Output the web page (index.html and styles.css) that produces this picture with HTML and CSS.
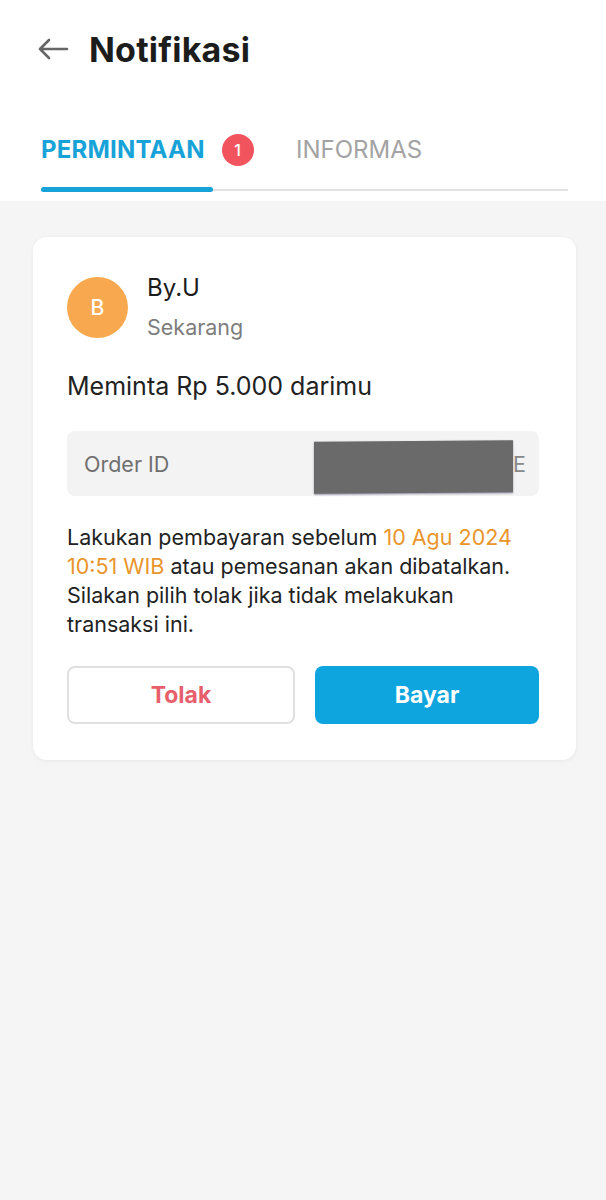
FILE: index.html
```html
<!DOCTYPE html>
<html lang="id">
<head>
    <meta charset="UTF-8">
    <meta name="viewport" content="width=device-width, initial-scale=1.0">
    <title>Notifikasi</title>
    <link rel="stylesheet" href="styles.css">
</head>
<body>
    <header class="top">
        <div class="title-bar">
            <svg class="back" width="32" height="22" viewBox="0 0 32 22" aria-hidden="true">
                <path d="M30 11H3M12 2L3 11l9 9" fill="none" stroke="#666" stroke-width="2.6" stroke-linecap="round" stroke-linejoin="round"/>
            </svg>
            <h1>Notifikasi</h1>
        </div>

        <nav class="tabs">
            <div class="tab active">
                <span>PERMINTAAN</span>
                <span class="badge">1</span>
            </div>
            <div class="tab">
                <span>INFORMAS</span>
            </div>
        </nav>
    </header>

    <main class="content">
        <div class="card">
            <div class="sender">
                <div class="avatar">B</div>
                <div>
                    <div class="sender-name">By.U</div>
                    <div class="sender-time">Sekarang</div>
                </div>
            </div>

            <p class="request">Meminta Rp 5.000 darimu</p>

            <div class="order-box">
                <span>Order ID</span>
                <span class="order-value"><span class="redacted"></span>E</span>
            </div>

            <p class="note">
                Lakukan pembayaran sebelum <span class="due">10 Agu 2024</span> <span class="due">10:51 WIB</span> atau pemesanan akan dibatalkan. Silakan pilih tolak jika tidak melakukan transaksi ini.
            </p>

            <div class="actions">
                <button class="btn btn-reject">Tolak</button>
                <button class="btn btn-pay">Bayar</button>
            </div>
        </div>
    </main>
</body>
</html>
```

FILE: styles.css
```css
/* Base page */
body {
    margin: 0;
    font-family: 'Inter', 'Noto Sans', sans-serif;
    background-color: #f5f5f5;
    color: #222;
    min-height: 1200px;
}

/* Header with title and tabs */
.top {
    background-color: #fff;
    padding: 0 38px 0 38px;
    height: 201px;
    box-sizing: border-box;
}

.title-bar {
    display: flex;
    align-items: center;
    gap: 20px;
    height: 98px;
}

.back {
    margin-left: -1px;
}

h1 {
    margin: 0;
    font-size: 34px;
    font-weight: 700;
    color: #1c1c1c;
    letter-spacing: 0.2px;
}

.tabs {
    display: flex;
    margin-left: 3px;
    border-bottom: 2px solid #e2e2e2;
    height: 93px;
    box-sizing: border-box;
}

.tab {
    display: flex;
    align-items: center;
    gap: 17px;
    height: 100%;
    font-size: 24px;
    color: #a3a3a3;
    padding-top: 12px;
    box-sizing: border-box;
}

.tab.active {
    color: #17a2d8;
    font-weight: 700;
    letter-spacing: 0.2px;
    width: 172px;
    margin-right: 83px;
    position: relative;
}

.tab.active::after {
    content: "";
    position: absolute;
    left: 0;
    right: 0;
    bottom: -3px;
    height: 5px;
    border-radius: 3px;
    background-color: #17a2d8;
}

.badge {
    flex: none;
    width: 32px;
    height: 32px;
    border-radius: 50%;
    background-color: #f2545e;
    color: #fff;
    font-size: 16px;
    font-weight: 500;
    display: flex;
    align-items: center;
    justify-content: center;
    letter-spacing: 0;
}

/* Main content */
.content {
    padding: 36px 30px 0 33px;
}

.card {
    background-color: #fff;
    border-radius: 14px;
    padding: 40px 37px 36px 34px;
    box-shadow: 0px 1px 4px rgba(0, 0, 0, 0.06);
}

.sender {
    display: flex;
    align-items: flex-start;
    gap: 19px;
}

.avatar {
    width: 61px;
    height: 61px;
    border-radius: 50%;
    background-color: #f8a94f;
    color: #fff;
    font-size: 21px;
    font-weight: 500;
    display: flex;
    align-items: center;
    justify-content: center;
}

.sender-name {
    font-size: 24px;
    color: #1c1c1c;
    line-height: 28px;
    margin-top: -3px;
}

.sender-time {
    font-size: 21.5px;
    color: #7d7d7d;
    margin-top: 12px;
}

.request {
    margin: 31px 0 0 0;
    font-size: 25px;
    line-height: 30px;
}

.order-box {
    margin-top: 30px;
    background-color: #f3f3f3;
    border-radius: 8px;
    height: 65px;
    padding: 0 17px;
    display: flex;
    align-items: center;
    justify-content: space-between;
    font-size: 21.5px;
    color: #6f6f6f;
}

.order-value {
    display: flex;
    align-items: center;
    color: #888;
    margin-right: -4px;
}

.redacted {
    display: inline-block;
    width: 199px;
    height: 52px;
    margin-top: 6px;
    background-color: #6a6a6a;
    transform: skewY(-0.5deg);
    box-shadow: 0 1px 2px rgba(40, 40, 90, 0.5);
}

.note {
    margin: 27px 0 0 0;
    font-size: 21.5px;
    line-height: 29px;
    color: #222;
}

.due {
    color: #e9952b;
}

.actions {
    display: flex;
    gap: 20px;
    margin-top: 27px;
}

.btn {
    flex: 1;
    height: 58px;
    border-radius: 8px;
    font-family: inherit;
    font-size: 23px;
    font-weight: 700;
    cursor: pointer;
}

.btn-reject {
    background-color: #fff;
    border: 2px solid #e0e0e0;
    color: #e85f6c;
}

.btn-pay {
    background-color: #0ea5df;
    border: none;
    color: #fff;
}
```
